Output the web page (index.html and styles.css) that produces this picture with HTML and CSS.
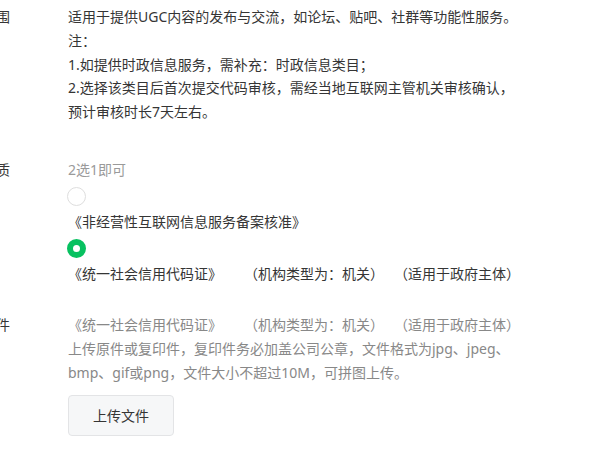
FILE: index.html
```html
<!DOCTYPE html>
<html lang="zh-CN">

<head>
  <meta charset="UTF-8" />
  <meta name="viewport" content="width=device-width, initial-scale=1.0" />
  <title>类目资质</title>
  <link rel="stylesheet" href="styles.css">
</head>

<body>

  <div class="form">

    <div class="row row-scope">
      <div class="label">服务范围</div>
      <div class="field">
        <div>适用于提供UGC内容的发布与交流，如论坛、贴吧、社群等功能性服务。</div>
        <div>注：</div>
        <div>1.如提供时政信息服务，需补充：时政信息类目；</div>
        <div>2.选择该类目后首次提交代码审核，需经当地互联网主管机关审核确认，</div>
        <div>预计审核时长7天左右。</div>
      </div>
    </div>

    <div class="row row-cert">
      <div class="label">主体资质</div>
      <div class="field">
        <div class="hint">2选1即可</div>
        <span class="radio"></span>
        <div>《非经营性互联网信息服务备案核准》</div>
        <span class="radio checked"></span>
        <div>《统一社会信用代码证》<span class="note">（机构类型为：机关）</span><span class="note">（适用于政府主体）</span></div>
      </div>
    </div>

    <div class="row row-file">
      <div class="label">资质文件</div>
      <div class="field muted">
        <div>《统一社会信用代码证》<span class="note">（机构类型为：机关）</span><span class="note">（适用于政府主体）</span></div>
        <div>上传原件或复印件，复印件务必加盖公司公章，文件格式为jpg、jpeg、</div>
        <div>bmp、gif或png，文件大小不超过10M，可拼图上传。</div>
        <button class="upload">上传文件</button>
      </div>
    </div>

  </div>

</body>

</html>
```

FILE: styles.css
```css
body {
  margin: 0;
  background-color: #fff;
  color: #353535;
  font-family: "Noto Sans", "Noto Sans CJK SC", sans-serif;
  font-size: 14px;
  line-height: 23.8px;
  text-spacing-trim: space-all;
  font-feature-settings: "chws" 0, "halt" 0;
  overflow: hidden;
}

.form {
  margin-left: -46px;
  padding-top: 5px;
}

.row {
  display: flex;
}

.label {
  width: 114px;
  flex-shrink: 0;
  color: #353535;
}

.field {
  flex: 1;
  white-space: nowrap;
}

.note {
  margin-left: 10px;
}

.note:first-of-type {
  margin-left: 22px;
}

.row-cert {
  margin-top: 34px;
}

.row-file {
  margin-top: 28px;
}

.hint {
  color: #9a9a9a;
}

.muted {
  color: #888;
}

.radio {
  display: block;
  box-sizing: border-box;
  width: 19px;
  height: 19px;
  margin: 5px 0 4px -1px;
  border: 1px solid #dedede;
  border-radius: 50%;
  background-color: #fff;
}

.radio.checked {
  border: 6px solid #07c160;
}

.upload {
  display: block;
  margin-top: 10px;
  width: 106px;
  height: 41px;
  background-color: #f6f7f8;
  border: 1px solid #e3e4e6;
  border-radius: 4px;
  color: #353535;
  font-family: inherit;
  font-size: 14px;
  cursor: pointer;
}
```
